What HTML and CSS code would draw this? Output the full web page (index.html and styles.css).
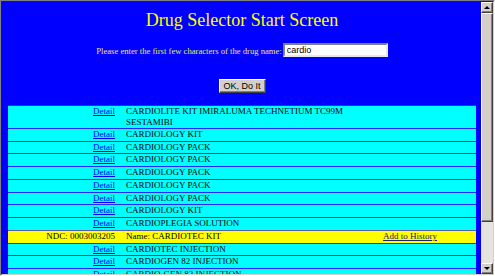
FILE: index.html
```html
<!DOCTYPE html>
<html>
<head>
<meta charset="utf-8">
<title>Drug Selector Start Screen</title>
<link rel="stylesheet" href="styles.css">
</head>
<body>
<div class="frame">
  <div class="frame-inner">
    <div class="view">
      <div class="page">
        <h1 class="title">Drug Selector Start Screen</h1>
        <form class="search">
          <div class="prompt">
            <label class="prompt-label" for="drug">Please enter the first few characters of the drug name:</label>
            <input class="field" id="drug" type="text" value="cardio">
          </div>
          <div class="actions"><button class="btn" type="button">OK, Do It</button></div>
        </form>
        <table class="results">
          <colgroup><col class="c1"><col class="c2"><col class="c3"></colgroup>
          <tr class="first"><td class="k"><a href="#">Detail</a></td><td class="n">CARDIOLITE KIT IMIRALUMA TECHNETIUM TC99M SESTAMIBI</td><td class="x"></td></tr>
          <tr><td class="k"><a href="#">Detail</a></td><td class="n">CARDIOLOGY KIT</td><td class="x"></td></tr>
          <tr><td class="k"><a href="#">Detail</a></td><td class="n">CARDIOLOGY PACK</td><td class="x"></td></tr>
          <tr><td class="k"><a href="#">Detail</a></td><td class="n">CARDIOLOGY PACK</td><td class="x"></td></tr>
          <tr><td class="k"><a href="#">Detail</a></td><td class="n">CARDIOLOGY PACK</td><td class="x"></td></tr>
          <tr><td class="k"><a href="#">Detail</a></td><td class="n">CARDIOLOGY PACK</td><td class="x"></td></tr>
          <tr><td class="k"><a href="#">Detail</a></td><td class="n">CARDIOLOGY PACK</td><td class="x"></td></tr>
          <tr><td class="k"><a href="#">Detail</a></td><td class="n">CARDIOLOGY KIT</td><td class="x"></td></tr>
          <tr><td class="k"><a href="#">Detail</a></td><td class="n">CARDIOPLEGIA SOLUTION</td><td class="x"></td></tr>
          <tr class="sel"><td class="k">NDC: 0003003205</td><td class="n">Name: CARDIOTEC KIT</td><td class="x"><a class="hist" href="#">Add to History</a></td></tr>
          <tr><td class="k"><a href="#">Detail</a></td><td class="n">CARDIOTEC INJECTION</td><td class="x"></td></tr>
          <tr><td class="k"><a href="#">Detail</a></td><td class="n">CARDIOGEN 82 INJECTION</td><td class="x"></td></tr>
          <tr><td class="k"><a href="#">Detail</a></td><td class="n">CARDIO-GEN 82 INJECTION</td><td class="x"></td></tr>
        </table>
      </div>
    </div>
    <div class="scrollbar">
      <div class="sb-btn"><span class="arrow-up"></span></div>
      <div class="sb-thumb"></div>
      <div class="sb-track"></div>
      <div class="sb-btn"><span class="arrow-down"></span></div>
    </div>
  </div>
</div>
</body>
</html>
```
FILE: styles.css
```css
html, body {
  margin: 0;
  padding: 0;
  overflow: hidden;
  background: #d4d0c8;
}

.frame {
  box-sizing: border-box;
  width: 495px;
  height: 276px;
  border: 1px solid;
  border-color: #808080 #ffffff #ffffff #808080;
}

.frame-inner {
  box-sizing: border-box;
  height: 100%;
  display: flex;
  border: 1px solid;
  border-color: #202020 #d4d0c8 #d4d0c8 #202020;
}

.view {
  flex: 1;
  background: #0000ff;
  overflow: hidden;
}

.page {
  padding: 8px 5px 0 6px;
}

.title {
  margin: 0;
  font: normal 18px/20px "Liberation Serif", "Times New Roman", serif;
  color: #ffff00;
  text-align: center;
}

.search {
  margin: 0;
}

.prompt {
  margin-top: 13px;
  display: flex;
  justify-content: center;
  align-items: flex-end;
  gap: 1px;
}

.prompt-label {
  font: 8.65px/11px "Liberation Serif", "Times New Roman", serif;
  color: #e6e66e;
}

.field {
  box-sizing: border-box;
  width: 105px;
  height: 14px;
  margin: 0;
  padding: 0 0 0 2px;
  border: 2px solid;
  border-color: #808080 #e8e8e8 #e8e8e8 #808080;
  background: #ffffff;
  font: 9px/10px "Liberation Sans", Arial, sans-serif;
  color: #000000;
  outline: none;
}

.actions {
  margin-top: 22px;
  display: flex;
  justify-content: center;
}

.btn {
  box-sizing: border-box;
  width: 47px;
  height: 14px;
  margin: 0;
  padding: 0;
  border: 1px solid;
  border-color: #ffffff #404040 #404040 #ffffff;
  box-shadow: inset -1px -1px #808080;
  background: #d4d0c8;
  font: 9px/12px "Liberation Sans", Arial, sans-serif;
  color: #000000;
}

.results {
  margin-top: 12px;
  width: 468px;
  border-collapse: collapse;
  table-layout: fixed;
  background: #00ffff;
  font: 9px "Liberation Serif", "Times New Roman", serif;
  color: #000000;
}

.c1 { width: 114px; }
.c2 { width: 256px; }
.c3 { width: 98px; }

.results td {
  padding: 0;
  border-top: 1px solid #2a2aff;
  line-height: 11.73px;
  vertical-align: top;
}

.results tr.first td {
  line-height: 11px;
}

.results td.k {
  text-align: right;
  padding-right: 7px;
}

.results td.n {
  padding-left: 4px;
}

.results td.x {
  padding-left: 5px;
}

.results a {
  color: #0000ff;
  text-decoration: underline;
}

.results tr.sel td {
  background: #ffff00;
  border-top-color: #6060a0;
}

.results a.hist {
  color: #202070;
}

.scrollbar {
  width: 12px;
  display: flex;
  flex-direction: column;
  background: #e6e4de;
}

.sb-btn,
.sb-thumb {
  box-sizing: border-box;
  background: #d4d0c8;
  border: 1px solid;
  border-color: #ffffff #404040 #404040 #ffffff;
  box-shadow: inset -1px -1px #808080;
}

.sb-btn {
  height: 11px;
  display: flex;
  align-items: center;
  justify-content: center;
}

.sb-thumb {
  height: 209px;
}

.sb-track {
  flex: 1;
}

.arrow-up,
.arrow-down {
  width: 0;
  height: 0;
  border-left: 3px solid transparent;
  border-right: 3px solid transparent;
}

.arrow-up {
  border-bottom: 3px solid #000000;
}

.arrow-down {
  border-top: 3px solid #000000;
}
```
